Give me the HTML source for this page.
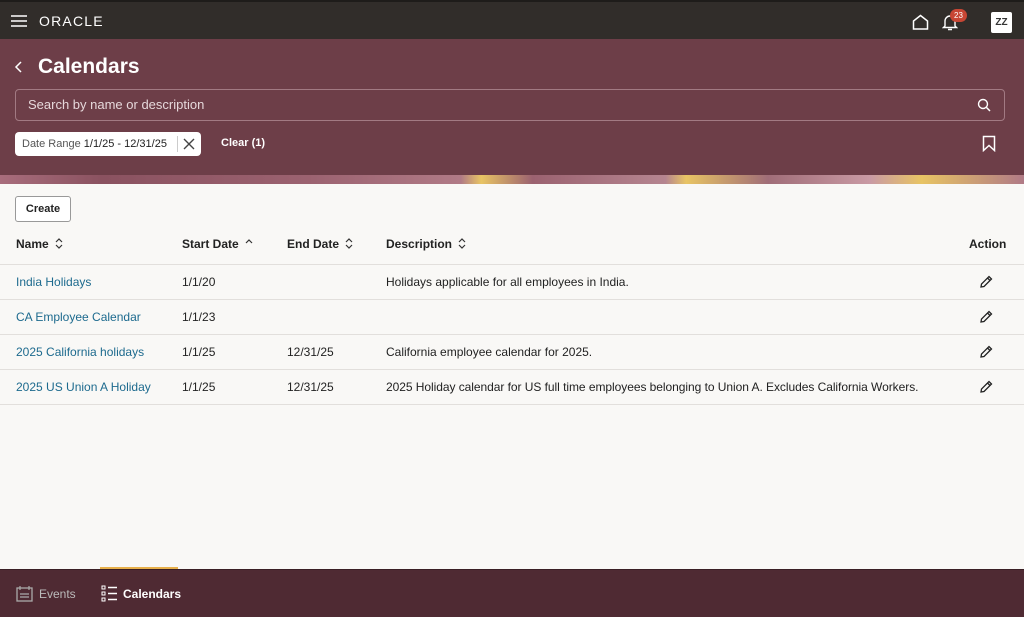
<!DOCTYPE html><html><head><style>
body{margin:0;width:1024px;height:616px;overflow:hidden;font-family:"Liberation Sans",sans-serif;background:#f9f8f6;position:relative}
.top{position:absolute;left:0;top:0;width:1024px;height:39px;background:#312d2a;border-top:2px solid #1e1c1a;box-sizing:border-box}
.hdr{position:absolute;left:0;top:39px;width:1024px;height:136px;background:#6d3e48}
.strip{position:absolute;left:0;top:175px;width:1024px;height:9px;background:linear-gradient(90deg,#a86d7c 0,#8a5260 10%,#9b6270 30%,#b07a86 45%,#e8c464 47%,#9b6270 52%,#b58590 65%,#e8c464 67%,#a06d78 75%,#c99aa4 85%,#e8c464 90%,#b07a86 100%)}
.w{color:#fff;position:absolute}
.search{position:absolute;left:15px;top:89px;width:990px;height:32px;border:1px solid #a27a83;border-radius:4px;box-sizing:border-box;color:#e6d8db;font-size:13px;line-height:30px;padding-left:12px}
.chip{position:absolute;left:15px;top:132px;width:186px;height:24px;background:#fff;border-radius:4px;font-size:11px;line-height:24px;padding-left:7px;box-sizing:border-box;color:#555}
.chip b{color:#222;font-weight:normal}
.row{position:absolute;left:0;width:1024px;height:35px;border-bottom:1px solid #e2dfdc;font-size:12px;color:#222}
.row span{position:absolute;top:11px}
.row a{color:#1d6a8e}
.row svg{position:absolute;left:979px;top:11px}
.row svg.s{position:relative;left:6px;top:1px}
.bot{position:absolute;left:0;top:569px;width:1024px;height:47px;background:#4f2a33;border-top:1px solid #3a1f25}
</style></head><body>
<div class="top">
<svg style="position:absolute;left:11px;top:13px" width="16" height="12"><path d="M0 1H16M0 6H16M0 11H16" stroke="#fff" stroke-width="1.6"/></svg>
<div class="w" style="left:39px;top:11px;font-size:14px;letter-spacing:1.2px">ORACLE</div>
<svg style="position:absolute;left:912px;top:12px" width="17" height="16"><path d="M1.5 15V7L8.5 1.5L15.5 7V15Z" fill="none" stroke="#fff" stroke-width="1.5"/></svg>
<svg style="position:absolute;left:942px;top:11px" width="16" height="18"><path d="M3 13V8A5 5 0 0 1 13 8V13L14.5 14.5H1.5Z M6 16.5H10" fill="none" stroke="#fff" stroke-width="1.4"/></svg>
<div style="position:absolute;left:950px;top:7px;width:17px;height:13px;border-radius:7px;background:#c74634;color:#fff;font-size:8px;text-align:center;line-height:13px">23</div>
<div style="position:absolute;left:991px;top:10px;width:21px;height:21px;background:#fff;border-radius:2px;font-size:10px;font-weight:bold;text-align:center;line-height:21px;color:#333">ZZ</div>
</div>
<div class="hdr">
<svg style="position:absolute;left:14px;top:21px" width="10" height="14"><path d="M7 2L2 7L7 12" fill="none" stroke="#fff" stroke-width="1.5"/></svg>
<div class="w" style="left:38px;top:16px;font-size:21px;font-weight:bold">Calendars</div>
<div class="w" style="left:221px;top:98px;font-size:11px;font-weight:bold">Clear (1)</div>
<svg style="position:absolute;left:982px;top:96px" width="14" height="17"><path d="M1.5 1.5H12.5V15.5L7 10.5L1.5 15.5Z" fill="none" stroke="#fff" stroke-width="1.5"/></svg>
</div>
<div class="search">Search by name or description
<svg style="position:absolute;right:13px;top:8px" width="14" height="14"><circle cx="6" cy="6" r="4.5" fill="none" stroke="#fff" stroke-width="1.4"/><path d="M9.5 9.5L13 13" stroke="#fff" stroke-width="1.5"/></svg></div>
<div class="chip">Date Range <b>1/1/25 - 12/31/25</b><span style="position:absolute;left:162px;top:4px;height:16px;border-left:1px solid #ccc"></span>
<svg style="position:absolute;left:168px;top:6px" width="12" height="12"><path d="M1 1L11 11M11 1L1 11" stroke="#444" stroke-width="1.4"/></svg></div>
<div class="strip"></div>
<div style="position:absolute;left:15px;top:196px;width:56px;height:26px;border:1px solid #999;border-radius:3px;box-sizing:border-box;background:#fff;font-size:11px;font-weight:bold;text-align:center;line-height:24px;color:#222">Create</div>
<div class="row" style="top:229px;font-weight:bold">
<span style="left:16px;top:8px">Name<svg class="s" width="8" height="11"><path d="M1 4L4 1L7 4M1 7L4 10L7 7" fill="none" stroke="#333" stroke-width="1.2"/></svg></span>
<span style="left:182px;top:8px">Start Date<svg class="s" width="8" height="11"><path d="M1 5L4 2L7 5" fill="none" stroke="#333" stroke-width="1.2"/></svg></span>
<span style="left:287px;top:8px">End Date<svg class="s" width="8" height="11"><path d="M1 4L4 1L7 4M1 7L4 10L7 7" fill="none" stroke="#333" stroke-width="1.2"/></svg></span>
<span style="left:386px;top:8px">Description<svg class="s" width="8" height="11"><path d="M1 4L4 1L7 4M1 7L4 10L7 7" fill="none" stroke="#333" stroke-width="1.2"/></svg></span>
<span style="left:969px;top:8px">Action</span></div>
<div class="row" style="top:264px"><span style="left:16px"><a>India Holidays</a></span><span style="left:182px">1/1/20</span><span style="left:386px">Holidays applicable for all employees in India.</span><svg width="14" height="14"><path d="M2 12L2.5 9L10 1.5L12.5 4L5 11.5Z M8.5 3L11 5.5" fill="none" stroke="#222" stroke-width="1.3"/></svg></div>
<div class="row" style="top:299px"><span style="left:16px"><a>CA Employee Calendar</a></span><span style="left:182px">1/1/23</span><svg width="14" height="14"><path d="M2 12L2.5 9L10 1.5L12.5 4L5 11.5Z M8.5 3L11 5.5" fill="none" stroke="#222" stroke-width="1.3"/></svg></div>
<div class="row" style="top:334px"><span style="left:16px"><a>2025 California holidays</a></span><span style="left:182px">1/1/25</span><span style="left:287px">12/31/25</span><span style="left:386px">California employee calendar for 2025.</span><svg width="14" height="14"><path d="M2 12L2.5 9L10 1.5L12.5 4L5 11.5Z M8.5 3L11 5.5" fill="none" stroke="#222" stroke-width="1.3"/></svg></div>
<div class="row" style="top:369px"><span style="left:16px"><a>2025 US Union A Holiday</a></span><span style="left:182px">1/1/25</span><span style="left:287px">12/31/25</span><span style="left:386px;letter-spacing:-0.05px">2025 Holiday calendar for US full time employees belonging to Union A. Excludes California Workers.</span><svg width="14" height="14"><path d="M2 12L2.5 9L10 1.5L12.5 4L5 11.5Z M8.5 3L11 5.5" fill="none" stroke="#222" stroke-width="1.3"/></svg></div>
<div style="position:absolute;left:100px;top:567px;width:78px;height:2px;background:#e8b04a"></div>
<div class="bot">
<svg style="position:absolute;left:16px;top:15px" width="17" height="17"><rect x="1" y="3" width="15" height="13" fill="none" stroke="#aaa" stroke-width="1.3"/><path d="M4 1V5M13 1V5M4 9H13M4 12H13" stroke="#aaa" stroke-width="1.2"/></svg>
<div style="position:absolute;left:39px;top:17px;color:#bbb;font-size:12px">Events</div>
<svg style="position:absolute;left:101px;top:15px" width="17" height="17"><rect x="1" y="1" width="3" height="3" fill="none" stroke="#fff"/><rect x="1" y="7" width="3" height="3" fill="none" stroke="#fff"/><rect x="1" y="13" width="3" height="3" fill="none" stroke="#fff"/><path d="M7 2.5H16M7 8.5H16M7 14.5H16" stroke="#fff" stroke-width="1.4"/></svg>
<div style="position:absolute;left:123px;top:17px;color:#fff;font-size:12px;font-weight:bold">Calendars</div>
</div>
</body></html>
